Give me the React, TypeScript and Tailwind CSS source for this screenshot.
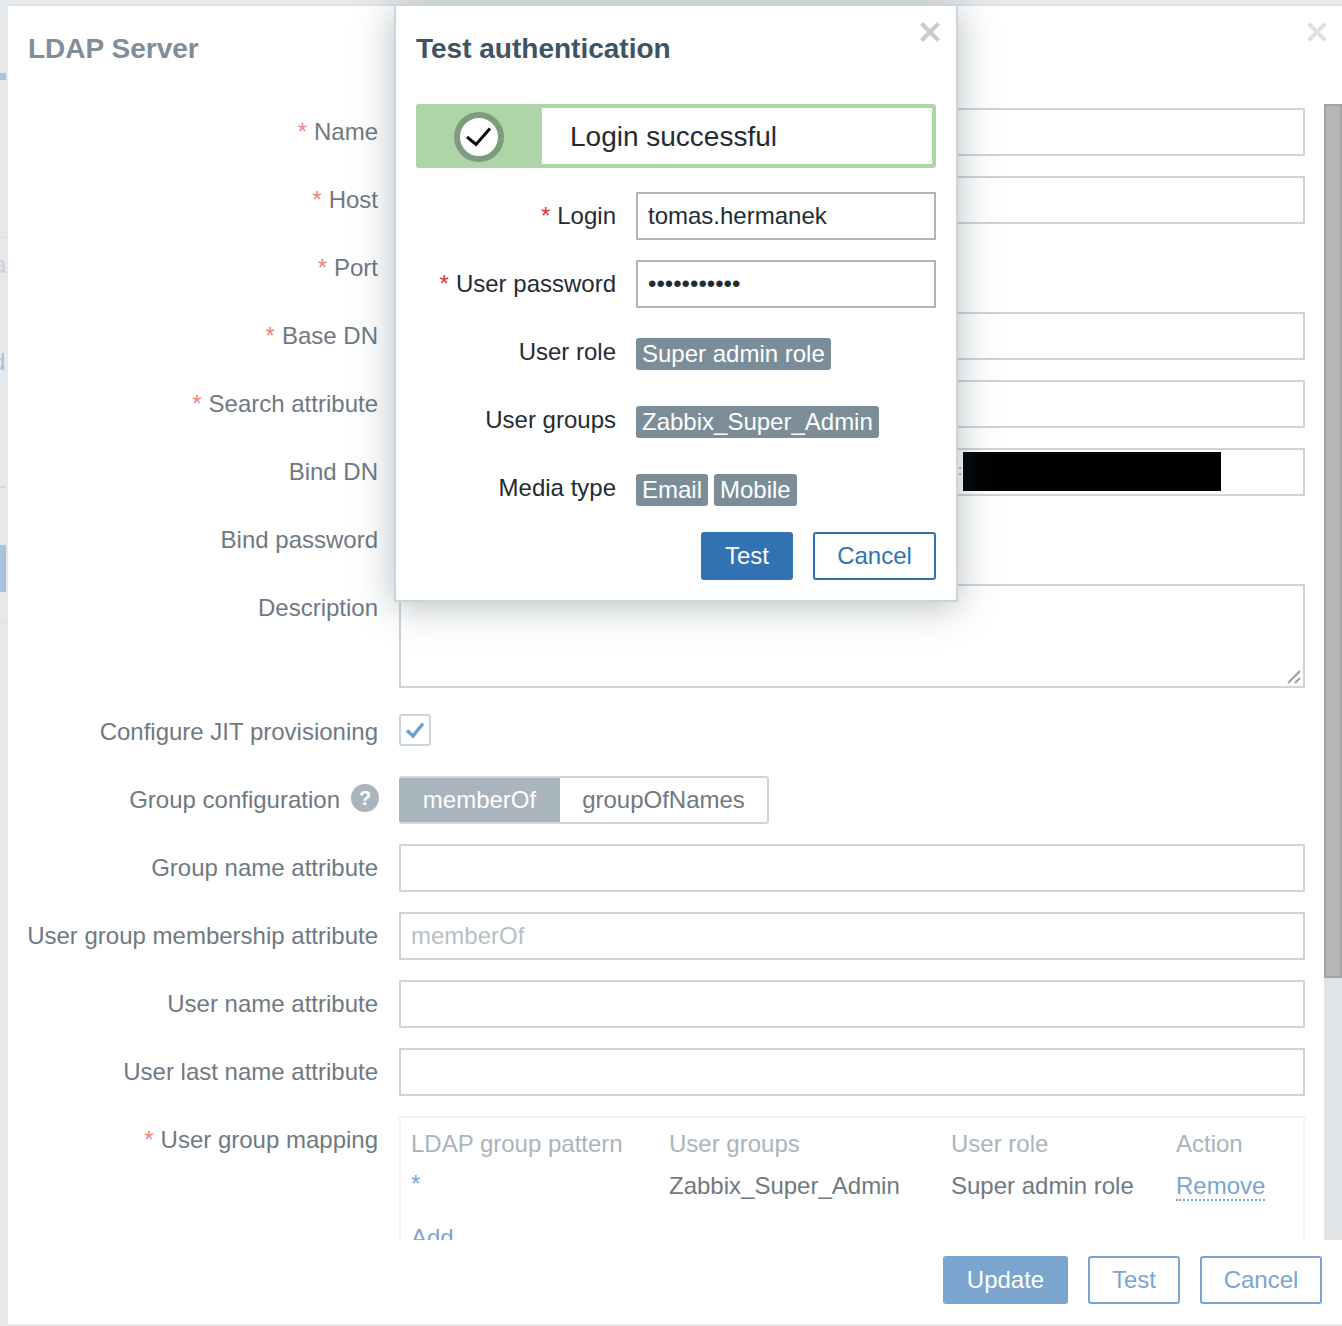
const labelColor = "text-[#6f7982]";

function Req() {
  return <span className="mr-[7px] text-[#e98585]">*</span>;
}

function CloseIcon({ className }: { className: string }) {
  return (
    <svg viewBox="0 0 20 20" className={className} fill="none" stroke="currentColor" strokeWidth="4">
      <path d="M1.5 1.5 18.5 18.5M18.5 1.5 1.5 18.5" />
    </svg>
  );
}

function Row({
  label,
  required,
  children,
  className = "mb-[20px] h-[48px]",
  labelHeight = "h-[48px]",
}: {
  label: React.ReactNode;
  required?: boolean;
  children?: React.ReactNode;
  className?: string;
  labelHeight?: string;
}) {
  return (
    <div className={`flex gap-[21px] ${className}`}>
      <div className={`flex w-[370px] shrink-0 items-center justify-end whitespace-nowrap ${labelHeight} ${labelColor}`}>
        {required ? <Req /> : null}
        {label}
      </div>
      {children}
    </div>
  );
}

function TextBox({ children, className = "" }: { children?: React.ReactNode; className?: string }) {
  return (
    <div className={`relative flex h-[48px] w-[906px] items-center border-2 border-[#ccd5d9] bg-white px-[10px] ${className}`}>
      {children}
    </div>
  );
}

function DialogRow({ label, required, children }: { label: string; required?: boolean; children: React.ReactNode }) {
  return (
    <div className="mb-[20px] flex h-[48px] items-center gap-[20px]">
      <div className="flex w-[200px] shrink-0 justify-end whitespace-nowrap text-[#1f2c33]">
        {required ? <span className="mr-[7px] text-[#d9383a]">*</span> : null}
        {label}
      </div>
      {children}
    </div>
  );
}

function Tag({ children }: { children: React.ReactNode }) {
  return (
    <span className="flex h-[32px] items-center rounded-[3px] bg-[#7b8d99] px-[6px] whitespace-nowrap text-white">
      {children}
    </span>
  );
}

function BackgroundSlivers() {
  return (
    <>
      <div className="absolute top-[73px] left-0 h-[7px] w-[6px] bg-[#a9c2dc]" />
      <div className="absolute top-[236px] left-0 h-[2px] w-[6px] bg-[#dfe3e6]" />
      <div className="absolute top-[251px] left-[-7px] text-[#c9cfd3]">a</div>
      <div className="absolute top-[348px] left-[-8px] text-[#a9c2dc]">d</div>
      <div className="absolute top-[486px] left-0 h-[2px] w-[6px] bg-[#d3d8dc]" />
      <div className="absolute top-[545px] left-0 h-[47px] w-[6px] bg-[#a9c2dc]" />
      <div className="absolute top-[622px] left-0 h-[2px] w-[6px] bg-[#dfe3e6]" />
    </>
  );
}

function MappingTable() {
  return (
    <div className="h-[200px] w-[906px] border-2 border-[#f0f2f3] pt-[8px] pl-[10px]">
      <div className="grid h-[36px] grid-cols-[258px_282px_225px_1fr] items-center text-[#a8b5bd]">
        <span>LDAP group pattern</span>
        <span>User groups</span>
        <span>User role</span>
        <span>Action</span>
      </div>
      <div className="mt-[6px] grid h-[36px] grid-cols-[258px_282px_225px_1fr] items-center text-[#6f7982]">
        <span className="-mt-[4px] text-[#7ba4cf]">*</span>
        <span>Zabbix_Super_Admin</span>
        <span>Super admin role</span>
        <span>
          <span className="border-b-2 border-dotted border-[#7ba4cf] text-[#7ba4cf]">Remove</span>
        </span>
      </div>
      <div className="mt-[20px] text-[#7ba4cf]">Add</div>
    </div>
  );
}

function OuterDialog() {
  return (
    <div className="relative ml-[8px] flex h-[1320px] w-[1334px] flex-col border-t-2 border-[#dde2e5] bg-white">
      <div className="h-[98px] shrink-0 pt-[27px] pl-[20px] text-[28px] leading-[32px] font-bold text-[#818d97]">
        LDAP Server
      </div>
      <CloseIcon className="absolute top-[16px] right-[15px] h-[20px] w-[20px] text-[#dce0e3]" />
      <div className="flex h-[1136px] shrink-0">
        <div className="w-[1316px] overflow-hidden pt-[4px]">
          <Row label="Name" required>
            <TextBox />
          </Row>
          <Row label="Host" required>
            <TextBox />
          </Row>
          <Row label="Port" required />
          <Row label="Base DN" required>
            <TextBox />
          </Row>
          <Row label="Search attribute" required>
            <TextBox />
          </Row>
          <Row label="Bind DN">
            <TextBox>
              <span className="absolute top-[10px] left-[557px] text-[14px] leading-[20px] text-[#6f7982]">:</span>
              <div className="absolute top-[2px] left-[562px] h-[39px] w-[258px] bg-black" />
            </TextBox>
          </Row>
          <Row label="Bind password" />
          <Row label="Description" className="mb-[26px] h-[104px]">
            <div className="relative h-[104px] w-[906px] border-2 border-[#ccd5d9] bg-white">
              <svg viewBox="0 0 14 14" className="absolute right-[2px] bottom-[2px] h-[14px] w-[14px]" stroke="#9a9fa3" strokeWidth="2">
                <path d="M1 13 13 1M8 13 13 8" />
              </svg>
            </div>
          </Row>
          <Row label="Configure JIT provisioning" className="mb-[14px] h-[48px]" labelHeight="h-[36px]">
            <div className="flex h-[32px] w-[32px] items-center justify-center rounded-[3px] border-2 border-[#ccd5d9] bg-white">
              <svg viewBox="0 0 20 20" className="h-[20px] w-[20px]" fill="none" stroke="#6d9fd1" strokeWidth="3.4">
                <path d="M2 10.5 8 16 18 3.5" />
              </svg>
            </div>
          </Row>
          <Row
            label={
              <>
                Group configuration
                <span className="-mt-[5px] -mr-[1px] ml-[11px] flex h-[28px] w-[28px] items-center justify-center rounded-full bg-[#a8b5bd] text-[20px] font-bold text-white">
                  ?
                </span>
              </>
            }
          >
            <div className="flex h-[48px] w-[370px] overflow-hidden rounded-[3px] border-2 border-l-0 border-[#ccd5d9]">
              <div className="-my-[2px] flex w-[161px] items-center justify-center bg-[#a8b5bd] text-white">memberOf</div>
              <div className={`flex flex-1 items-center justify-center ${labelColor}`}>groupOfNames</div>
            </div>
          </Row>
          <Row label="Group name attribute">
            <TextBox />
          </Row>
          <Row label="User group membership attribute">
            <TextBox>
              <span className="text-[#b7bfc5]">memberOf</span>
            </TextBox>
          </Row>
          <Row label="User name attribute">
            <TextBox />
          </Row>
          <Row label="User last name attribute">
            <TextBox />
          </Row>
          <Row label="User group mapping" required className="h-[200px]">
            <MappingTable />
          </Row>
        </div>
        <div className="w-[18px] shrink-0 bg-[#e0e4e7]">
          <div className="h-[874px] border-2 border-[#a3a4a6] bg-[#b5b6b8]" />
        </div>
      </div>
      <div className="flex flex-1 items-start justify-end gap-[20px] pt-[16px] pr-[20px]">
        <div className="flex h-[48px] w-[125px] items-center justify-center rounded-[3px] bg-[#7ba4cf] text-white">Update</div>
        <div className="flex h-[48px] w-[92px] items-center justify-center rounded-[3px] border-2 border-[#7ba4cf] text-[#7ba4cf]">Test</div>
        <div className="flex h-[48px] w-[122px] items-center justify-center rounded-[3px] border-2 border-[#7ba4cf] text-[#7ba4cf]">Cancel</div>
      </div>
    </div>
  );
}

function TestDialog() {
  return (
    <div className="absolute top-[4px] left-[394px] h-[598px] w-[564px] border-2 border-[#ccd5d9] bg-white shadow-[0_4px_36px_rgba(60,78,92,0.38)]">
      <CloseIcon className="absolute top-[16px] right-[16px] h-[20px] w-[20px] text-[#c5cdd2]" />
      <div className="px-[20px] pt-[27px]">
        <div className="text-[28px] leading-[32px] font-bold text-[#3f5463]">Test authentication</div>
        <div className="mt-[39px] mb-[24px] flex h-[64px] overflow-hidden rounded-[3px] border-4 border-[#aed5a8] bg-white">
          <div className="flex w-[122px] shrink-0 items-center justify-center bg-[#aed5a8] pt-[2px] pr-[4px]">
            <div className="flex h-[50px] w-[50px] items-center justify-center rounded-full border-[6px] border-[#7f9a7d] bg-white">
              <svg viewBox="0 0 26 20" className="h-[20px] w-[26px]" fill="none" stroke="#0b0b0b" strokeWidth="3">
                <path d="M1 10 10 17.5 24 1.5" />
              </svg>
            </div>
          </div>
          <div className="flex items-center pt-[2px] pl-[28px] text-[28px] text-[#1f2c33]">Login successful</div>
        </div>
        <DialogRow label="Login" required>
          <div className="flex h-[48px] w-[300px] items-center border-2 border-[#aab6bd] px-[10px] text-[#1f2c33]">tomas.hermanek</div>
        </DialogRow>
        <DialogRow label="User password" required>
          <div className="flex h-[48px] w-[300px] items-center border-2 border-[#aab6bd] px-[10px] text-[#1f2c33]">•••••••••••</div>
        </DialogRow>
        <DialogRow label="User role">
          <div className="mt-[4px] flex gap-[6px]">
            <Tag>Super admin role</Tag>
          </div>
        </DialogRow>
        <DialogRow label="User groups">
          <div className="mt-[4px] flex gap-[6px]">
            <Tag>Zabbix_Super_Admin</Tag>
          </div>
        </DialogRow>
        <DialogRow label="Media type">
          <div className="mt-[4px] flex gap-[6px]">
            <Tag>Email</Tag>
            <Tag>Mobile</Tag>
          </div>
        </DialogRow>
        <div className="flex justify-end gap-[20px]">
          <div className="flex h-[48px] w-[92px] items-center justify-center rounded-[3px] bg-[#3272b3] text-white">Test</div>
          <div className="flex h-[48px] w-[123px] items-center justify-center rounded-[3px] border-2 border-[#3272b3] text-[#3272b3]">Cancel</div>
        </div>
      </div>
    </div>
  );
}

export default function App() {
  return (
    <div className="relative h-[1326px] w-[1342px] overflow-hidden bg-[#e6e9ec] pt-[4px] font-['Liberation_Sans',Arial,sans-serif] text-[24px] leading-[28px]">
      <BackgroundSlivers />
      <OuterDialog />
      <TestDialog />
    </div>
  );
}
